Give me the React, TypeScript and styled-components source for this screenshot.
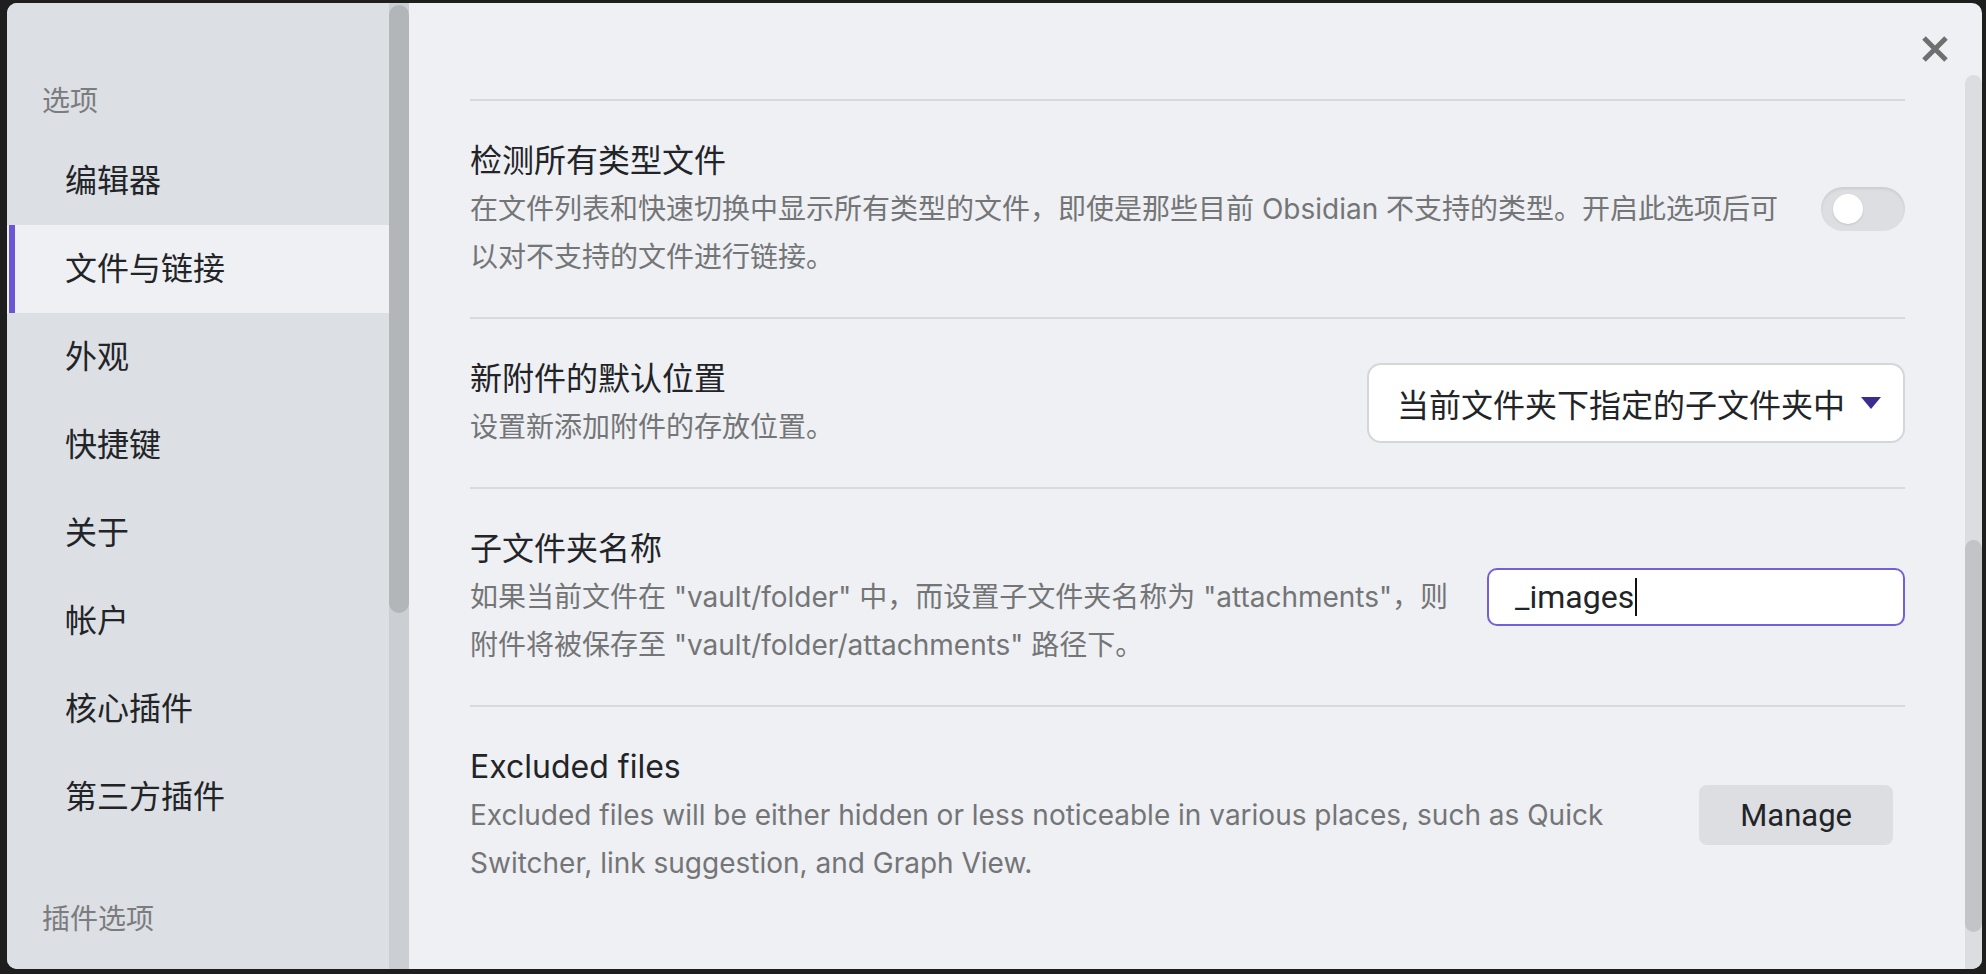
import React from "react";
import styled, { createGlobalStyle } from "styled-components";

const UI_FONT = `"Roboto", "Noto Sans CJK SC", sans-serif`;
const TEXT_FONT = `"Inter", "Noto Sans CJK SC", sans-serif`;

const GlobalStyle = createGlobalStyle`
  html, body {
    margin: 0;
    padding: 0;
    background: #1e1e1e;
  }
  #root {
    height: 974px;
  }
  * {
    box-sizing: border-box;
  }
`;

const Backdrop = styled.div`
  display: flex;
  width: 1986px;
  height: 974px;
  padding: 3px 4px 5px 7px;
  background: #1e1e1e;
  font-family: ${UI_FONT};
`;

const Modal = styled.div`
  position: relative;
  flex: 1;
  display: flex;
  border-radius: 10px;
  overflow: hidden;
  background: #eef0f3;
`;

const Sidebar = styled.div`
  display: flex;
  width: 402px;
  flex-shrink: 0;
`;

const SidebarList = styled.nav`
  width: 382px;
  background: #dcdfe3;
  padding-top: 79px;
`;

const SidebarHeading = styled.div<{ $gap?: number }>`
  margin-top: ${(p) => p.$gap ?? 0}px;
  margin-bottom: 15px;
  padding-left: 35px;
  font-size: 28px;
  line-height: 40px;
  color: #7b7c7e;
`;

const NavItem = styled.div<{ $active?: boolean }>`
  position: relative;
  height: 88px;
  padding-left: 58px;
  font-size: 32px;
  line-height: 88px;
  color: #222427;
  background: ${(p) => (p.$active ? "#eef0f3" : "transparent")};

  &::before {
    content: "";
    display: ${(p) => (p.$active ? "block" : "none")};
    position: absolute;
    left: 2px;
    top: 0;
    bottom: 0;
    width: 6px;
    background: #6b57d6;
  }
`;

const SidebarTrack = styled.div`
  width: 20px;
  background: #cbced2;
  padding-top: 2px;
`;

const SidebarThumb = styled.div`
  height: 608px;
  border-radius: 10px;
  background: #b3b6b9;
`;

const Main = styled.div`
  flex: 1;
  display: flex;
`;

const Content = styled.div`
  flex: 1;
  padding: 96px 60px 0 61px;
`;

const SettingItem = styled.div`
  display: flex;
  align-items: center;
  gap: 30px;
  padding: 36px 0;
  border-top: 2px solid #d8d9dc;
`;

const SettingInfo = styled.div`
  flex: 1;
  min-width: 0;
`;

const SettingName = styled.div`
  font-family: ${TEXT_FONT};
  font-size: 32px;
  line-height: 48px;
  color: #222427;
`;

const SettingDesc = styled.div`
  font-family: ${TEXT_FONT};
  font-size: 28px;
  line-height: 48px;
  color: #747577;
`;

const Toggle = styled.div`
  display: flex;
  align-items: center;
  width: 84px;
  height: 44px;
  padding-left: 12px;
  flex-shrink: 0;
  border-radius: 22px;
  background: #dcdee2;
  box-shadow: inset 0 2px 3px rgba(0, 0, 0, 0.08);
`;

const Knob = styled.div`
  width: 30px;
  height: 30px;
  border-radius: 50%;
  background: #ffffff;
  box-shadow: 0 1px 2px rgba(0, 0, 0, 0.12);
`;

const Dropdown = styled.div`
  display: flex;
  align-items: center;
  gap: 16px;
  height: 80px;
  padding: 0 22px 0 28px;
  flex-shrink: 0;
  border: 2px solid #d5d6d9;
  border-radius: 14px;
  background: #ffffff;
  font-size: 32px;
  color: #222427;
`;

const TextInput = styled.div`
  display: flex;
  align-items: center;
  width: 418px;
  height: 58px;
  padding-left: 26px;
  flex-shrink: 0;
  border: 2px solid #7360d8;
  border-radius: 10px;
  background: #ffffff;
  font-size: 32px;
  color: #222427;
`;

const Caret = styled.span`
  display: inline-block;
  width: 2px;
  height: 38px;
  margin-left: 1px;
  background: #111111;
`;

const Button = styled.button`
  height: 60px;
  padding: 0 41px;
  margin-right: 12px;
  flex-shrink: 0;
  border: none;
  border-radius: 8px;
  background: #dcdee2;
  font-family: ${UI_FONT};
  font-size: 31px;
  color: #222427;
`;

const CloseButton = styled.div`
  position: absolute;
  top: 32px;
  right: 33px;
  width: 28px;
  height: 28px;
`;

const MainTrack = styled.div`
  width: 17px;
  margin-top: 72px;
  border-radius: 9px 9px 0 0;
  background: #dcdde1;
  padding-top: 465px;
`;

const MainThumb = styled.div`
  height: 392px;
  border-radius: 9px;
  background: #c3c4c8;
`;

const navItems = ["编辑器", "文件与链接", "外观", "快捷键", "关于", "帐户", "核心插件", "第三方插件"];

export default function App() {
  return (
    <>
      <GlobalStyle />
      <Backdrop>
        <Modal>
          <Sidebar>
            <SidebarList>
              <SidebarHeading>选项</SidebarHeading>
              {navItems.map((item) => (
                <NavItem key={item} $active={item === "文件与链接"}>
                  {item}
                </NavItem>
              ))}
              <SidebarHeading $gap={59}>插件选项</SidebarHeading>
            </SidebarList>
            <SidebarTrack>
              <SidebarThumb />
            </SidebarTrack>
          </Sidebar>

          <Main>
            <Content>
              <SettingItem>
                <SettingInfo>
                  <SettingName>检测所有类型文件</SettingName>
                  <SettingDesc>
                    在文件列表和快速切换中显示所有类型的文件，即使是那些目前 Obsidian 不支持的类型。开启此选项后可
                    <br />
                    以对不支持的文件进行链接。
                  </SettingDesc>
                </SettingInfo>
                <Toggle>
                  <Knob />
                </Toggle>
              </SettingItem>

              <SettingItem>
                <SettingInfo>
                  <SettingName>新附件的默认位置</SettingName>
                  <SettingDesc>设置新添加附件的存放位置。</SettingDesc>
                </SettingInfo>
                <Dropdown>
                  <span>当前文件夹下指定的子文件夹中</span>
                  <svg width="20" height="12" viewBox="0 0 20 12">
                    <path d="M0 0 L20 0 L10 12 Z" fill="#3b2d8f" />
                  </svg>
                </Dropdown>
              </SettingItem>

              <SettingItem>
                <SettingInfo>
                  <SettingName>子文件夹名称</SettingName>
                  <SettingDesc>
                    如果当前文件在 "vault/folder" 中，而设置子文件夹名称为 "attachments"，则
                    <br />
                    附件将被保存至 "vault/folder/attachments" 路径下。
                  </SettingDesc>
                </SettingInfo>
                <TextInput>
                  _images
                  <Caret />
                </TextInput>
              </SettingItem>

              <SettingItem>
                <SettingInfo>
                  <SettingName>Excluded files</SettingName>
                  <SettingDesc>
                    Excluded files will be either hidden or less noticeable in various places, such as Quick
                    <br />
                    Switcher, link suggestion, and Graph View.
                  </SettingDesc>
                </SettingInfo>
                <Button>Manage</Button>
              </SettingItem>
            </Content>
            <MainTrack>
              <MainThumb />
            </MainTrack>
          </Main>

          <CloseButton>
            <svg width="28" height="28" viewBox="0 0 28 28">
              <path d="M3 3 L25 25 M25 3 L3 25" stroke="#6f6f6f" strokeWidth="5" fill="none" />
            </svg>
          </CloseButton>
        </Modal>
      </Backdrop>
    </>
  );
}
